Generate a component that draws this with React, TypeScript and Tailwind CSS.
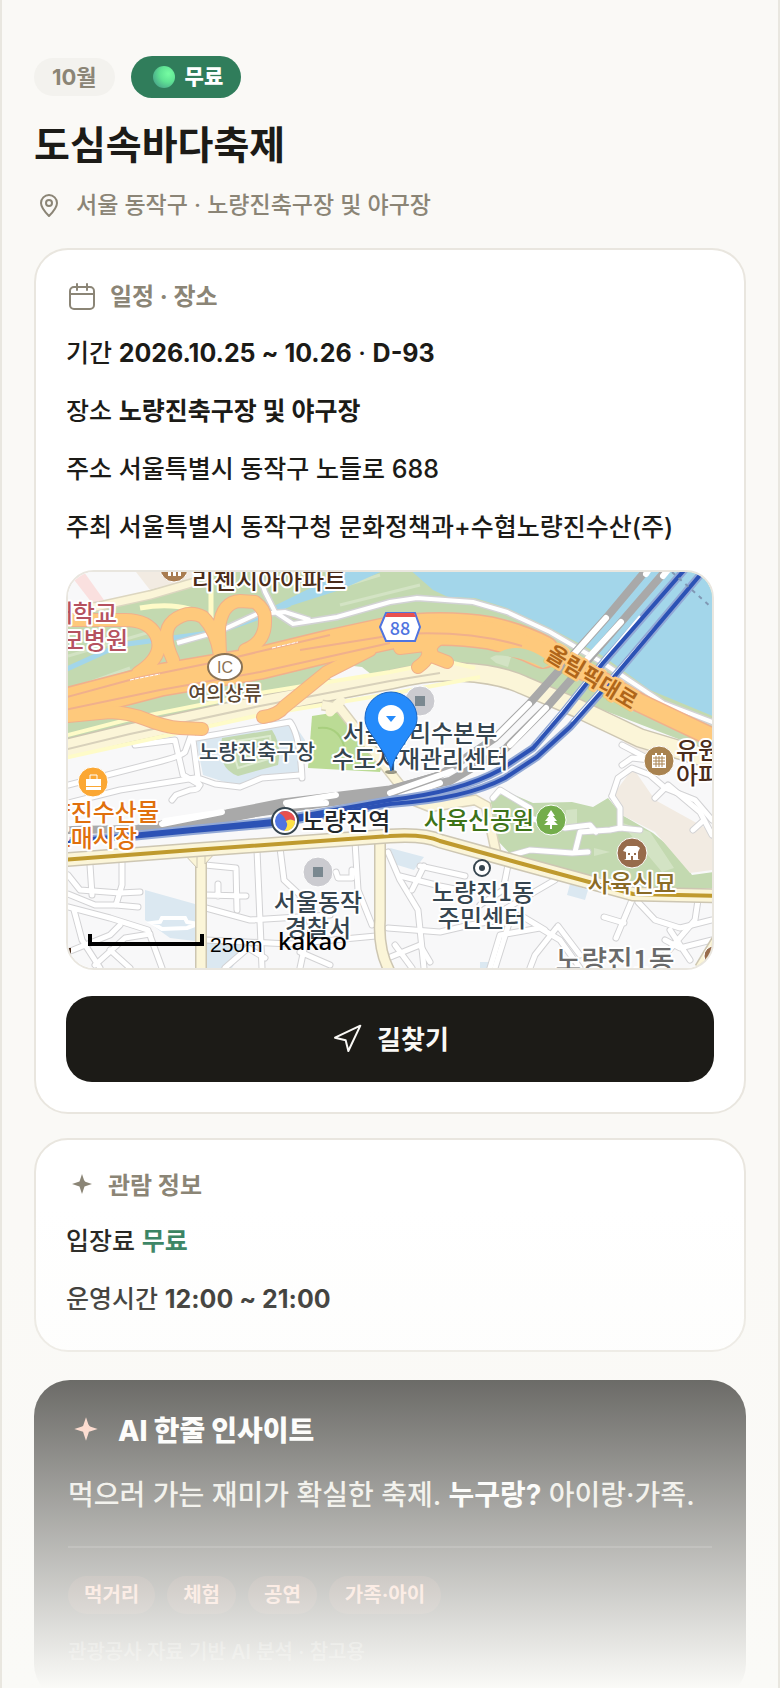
import React from 'react';
import { Navigation } from 'lucide-react';

const FONT = "font-['Inter','Noto_Sans_CJK_KR',sans-serif]";

const TAGS = ['먹거리', '체험', '공연', '가족·아이'];

const SCHEDULE = [
  { label: '기간', value: '2026.10.25 ~ 10.26', strong: true, extra: 'D-93' },
  { label: '장소', value: '노량진축구장 및 야구장', strong: true },
  { label: '주소', value: '서울특별시 동작구 노들로 688', strong: false },
  { label: '주최', value: '서울특별시 동작구청 문화정책과+수협노량진수산(주)', strong: false },
];

// Local streets on the map, drawn twice (casing + fill)
const STREETS = [
  'M68 785 L150 764 Q180 757 185 752 L193 730',
  'M68 803 L120 790 L195 778 Q205 790 190 790 L176 795 L172 800',
  'M192 732 L198 778 L215 784 L240 787 L262 778 L300 775',
  'M196 738 L290 722 Q300 735 302 778',
  'M135 745 L175 740 L183 775 L200 785',
  'M68 875 L80 890 L120 893 L140 892',
  'M90 865 L92 895 M122 862 L122 885 L116 905 L138 907',
  'M68 907 L110 918 L148 930 L162 968',
  'M74 910 L82 940 L100 968',
  'M68 894 L95 905 L115 905',
  'M68 952 L110 935 L120 925',
  'M95 965 L125 938 L150 934 M110 950 L130 968',
  'M205 865 L236 868 L237 910 M205 895 L246 896 M218 884 L218 896',
  'M206 908 L250 920 L330 915 M257 850 L262 968',
  'M280 848 L284 880 L300 895 L306 940 L300 968',
  'M355 842 L358 890 L372 925 M336 872 L338 878 L352 878 L352 870',
  'M206 940 L290 944 L376 936 M300 952 L330 965',
  'M225 968 L248 948 L265 958',
  'M388 852 L400 880 L418 910 L424 968',
  'M400 876 L440 886 L460 890 M420 866 L465 876 M424 866 L412 890',
  'M388 928 L440 932 L470 925 L500 920',
  'M388 958 L420 945 L430 962 M395 945 L412 968',
  'M490 968 L500 935 L540 928 L560 940 L580 968',
  'M558 926 L535 955 L530 968 M558 926 L580 955',
  'M500 912 L555 880 M508 865 L503 890 L480 905',
  'M510 920 L495 968 M545 930 L520 915 L500 925',
  'M632 900 L616 938 M604 917 L624 923',
  'M638 902 L655 920 L680 928 L712 920',
  'M698 900 L695 920 L665 955 M670 930 L690 960 M712 940 L680 948 L665 940',
  'M435 790 L410 800 M493 798 L500 790 L530 808 L530 815',
  'M512 855 L530 850 L572 853 L588 852 M575 852 L580 832 L610 830 L620 828 L640 830',
  'M530 818 L565 828 L590 825 L596 832',
  'M612 796 L618 778 L632 768 L650 775 L665 788 L695 800 L712 820',
  'M612 796 L620 808 L620 828',
  'M655 798 L668 785 L700 812 L712 835 M693 830 L704 820',
  'M622 745 L645 757 M622 765 L632 758 L650 760',
];

type LabelProps = {
  x: number;
  y: number;
  size?: number;
  color?: string;
  anchor?: 'start' | 'middle' | 'end';
  children: React.ReactNode;
};

const MapLabel: React.FC<LabelProps> = ({ x, y, size = 24, color = '#36454f', anchor = 'middle', children }) => (
  <text
    x={x}
    y={y}
    fontSize={size}
    fontWeight={500}
    fill={color}
    stroke="#ffffff"
    strokeWidth={4}
    strokeLinejoin="round"
    paintOrder="stroke"
    textAnchor={anchor}
  >
    {children}
  </text>
);

const Road: React.FC<{ d: string; width: number; fill: string; casing: string; edge?: number }> = ({
  d,
  width,
  fill,
  casing,
  edge = 3,
}) => (
  <>
    <path d={d} fill="none" stroke={casing} strokeWidth={width + edge} />
    <path d={d} fill="none" stroke={fill} strokeWidth={width} />
  </>
);

const RAMPS =
  'M68 620 L125 620 Q148 620 156 635 Q166 655 138 673 M173 660 Q160 632 173 621 Q188 609 203 617 Q216 630 220 655 M220 655 L219 628 Q222 602 240 601 L255 602 Q266 610 265 620 Q266 642 245 650 M68 716 L110 712 Q130 713 145 719 Q165 727 180 728 L202 729 M263 717 Q278 715 284 707 L327 672 L370 650 M400 648 L425 645 Q434 656 418 667 M445 636 Q424 645 434 657 L447 662';

const EXPRESSWAY =
  'M60 706 L160 680 L260 663 L330 646 L390 633 Q440 625 490 633 Q520 640 543 652';
const RIVERSIDE = 'M400 629 Q450 622 490 631 L543 651 L590 674 L640 703 L720 741';
const WALK =
  'M257 568 L265 592 L275 612 L293 624 L337 617 L390 602 L417 598 L473 602 L507 612 L550 632 L603 663 L663 703 L720 725 M177 643 L220 631 L257 614 L285 612 L310 620';
const SOUTH_ROAD =
  'M60 750 L130 733 L260 705 L390 680 Q430 670 460 672 Q500 674 523 685 L577 708 L640 738 L720 762';
const RAIL_A = 'M648 568 L607 617 L530 703 L495 738 L440 775 L390 790 L330 800 L227 814 L137 829 L60 830';
const RAIL_B = 'M668 568 L623 620 L547 707 L505 749 L450 781 L390 794 L283 809 L137 830';
const BLUE_A =
  'M686 568 L603 663 L563 713 L533 748 L500 770 Q460 792 390 800 L273 821 L193 829 L60 842';
const BLUE_B =
  'M706 568 L603 690 L570 727 L537 757 L505 778 Q465 799 390 804 L273 824 L193 831 L120 838';
const GOLD = 'M60 860 L193 850 L390 836 Q425 834 440 841 L523 864 L633 894 L720 896';

const FestivalMap: React.FC = () => (
  <svg
    viewBox="68 572 644 396"
    preserveAspectRatio="xMidYMid slice"
    className="block h-full w-full font-['Noto_Sans_CJK_KR',sans-serif]"
    role="img"
    aria-label="노량진축구장 주변 지도"
  >
    <rect x="60" y="560" width="660" height="420" fill="#f8f8f9" />

    {/* Land cover */}
    <path d="M60 640 L68 606 L130 598 L195 572 L720 572 L720 755 L577 700 L480 672 L390 685 L60 752 Z" fill="#c3d9b0" />
    <path d="M68 606 L60 572 L195 572 L190 580 L100 600 Z" fill="#f8f8f9" />
    <path d="M68 572 L84 572 L104 600 L92 603 Z" fill="#fae0df" />
    <path d="M136 572 L195 572 L190 580 L150 590 Z" fill="#f2ebe2" />
    <path d="M68 656 L150 632 M68 690 L130 668 M330 590 L380 575 M340 605 L420 585" stroke="#d3e3c4" strokeWidth="3" fill="none" />
    <path d="M60 672 L120 645 L217 632 L257 618 L290 604" fill="none" stroke="#a3d6ea" strokeWidth="5" />
    <path d="M272 607 L347 570 L385 570 L340 590 L290 606 Z" fill="#a3d6ea" />
    <path
      d="M408 568 L433 590 L448 597 L475 598 L507 608 L550 628 L603 656 L650 690 L720 719 L720 568 Z"
      fill="#a3d6ea"
    />
    <path d="M320 676 L345 665 L362 667 L372 675 L340 682 Z" fill="#f8f8f9" />
    <path d="M490 658 L500 653 L511 657 L508 667 L496 663 Z" fill="#d3e3c4" />
    <path d="M196 740 L290 718 L305 740 L302 778 L262 780 L240 787 L203 775 Z" fill="#dbe8f1" />
    <path d="M222 738 L272 730 Q282 745 278 765 L238 776 Q216 768 222 738 Z" fill="#c3d9b0" />
    <path d="M230 742 L270 736 L272 758 L238 768 Z" fill="none" stroke="#dcebcf" strokeWidth="2" />
    <path d="M312 716 L338 712 L384 760 L380 772 L308 768 Z" fill="#bbdb95" />
    <path d="M318 728 Q340 725 345 750 L345 768" fill="none" stroke="#a8cf7e" strokeWidth="2" />
    <path
      d="M490 797 L510 793 L533 803 L572 802 L593 807 L608 798 L622 815 L653 833 L677 853 L692 875 L720 871 L720 888 L650 890 L617 880 L577 874 L513 857 L497 840 Z"
      fill="#c3d9b0"
    />
    <path d="M566 810 L577 809 L577 828 L566 828 Z M594 848 L610 852 L594 856 Z M620 822 L650 832 L674 868 L662 872 Z" fill="#d3e3c4" />
    <path d="M633 768 L655 800 L720 836 L720 869 L690 873 L655 832 L622 815 L613 795 Z" fill="#f2ebe2" />
    <path d="M628 733 L662 748 L662 772 L622 748 Z" fill="#f2ebe2" />
    <path d="M145 890 L195 904 L195 941 L170 938 L145 920 Z" fill="#dbe8f1" />
    <path d="M206 940 L245 946 L232 968 L206 968 Z M390 848 L424 857 L414 870 L394 864 Z M570 884 L588 890 L585 900 L567 895 Z M480 962 L500 962 L498 970 L480 970 Z M263 918 L276 916 L274 922 Z" fill="#dbe8f1" />

    {/* Streets */}
    {STREETS.map((d) => (
      <path key={d} d={d} fill="none" stroke="#d2d2d4" strokeWidth="7" strokeLinecap="round" strokeLinejoin="round" />
    ))}
    {STREETS.map((d) => (
      <path key={d} d={d} fill="none" stroke="#ffffff" strokeWidth="5" strokeLinecap="round" strokeLinejoin="round" />
    ))}
    <path d="M152 923 L160 922 L162 918 L185 918 L187 922 L198 924 L187 928 L162 929 Z" fill="none" stroke="#ffffff" strokeWidth="4" />

    {/* Yellow roads */}
    <Road d="M60 612 L100 606 L150 595 L195 582" width={7} fill="#fbf5d8" casing="#dcd6c0" />
    <path d="M140 608 Q185 600 212 620 M211 568 L211 618" stroke="#fefbc8" strokeWidth="5" fill="none" />
    <Road d={SOUTH_ROAD} width={17} fill="#fbf5d8" casing="#cdc6b2" />
    <path d="M60 737 L130 719 L260 693 L390 672 L445 661 L475 668" fill="none" stroke="#fefbc8" strokeWidth="4" />
    <path d="M60 759 L260 715 L390 694 L480 677" fill="none" stroke="#fefbc8" strokeWidth="4" />
    <path d="M60 751 L130 734 L260 706 L390 681 L440 673" fill="none" stroke="#d8d1bb" strokeWidth="2" />
    <Road d="M322 705 L340 708 L392 775 L412 800 L430 807 L475 800 L486 806 L496 852" width={8} fill="#fbf5d8" casing="#d8d1bb" />
    <path d="M330 712 L341 701" stroke="#fbf5d8" strokeWidth="9" strokeLinecap="round" />
    <Road d="M201 850 L201 972" width={9} fill="#fbf5d8" casing="#cdc6b2" />
    <Road d="M380 838 L380 920 Q378 950 390 972" width={9} fill="#fbf5d8" casing="#cdc6b2" />
    <Road d="M720 935 L700 968" width={9} fill="#fbf5d8" casing="#cdc6b2" />
    <path d="M184 854 L197 868 L197 854 Z M205 853 L216 852 L205 864 Z" fill="#fbf5d8" stroke="#cdc6b2" />
    <Road d={GOLD} width={12} fill="#fbf5d8" casing="#cdc6b2" />
    <path d={GOLD} fill="none" stroke="#bf9a2e" strokeWidth="4" />

    {/* Expressway and ramps */}
    <Road d={WALK} width={4} fill="#ffffff" casing="#d2d2d4" />
    <g strokeLinecap="round" strokeLinejoin="round">
      <path d={RAMPS} fill="none" stroke="#f0b08c" strokeWidth="14" />
      <path d={EXPRESSWAY} fill="none" stroke="#f0b08c" strokeWidth="34" />
      <path d={RIVERSIDE} fill="none" stroke="#f0b08c" strokeWidth="20" />
      <path d={EXPRESSWAY} fill="none" stroke="#fec97c" strokeWidth="31" />
      <path d={RIVERSIDE} fill="none" stroke="#fec97c" strokeWidth="17" />
      <path d={RAMPS} fill="none" stroke="#fec97c" strokeWidth="12" />
    </g>
    <path
      d="M60 699 L137 678 L220 661 L270 649 L330 635 M60 711 L160 690 L260 672 L390 643 M300 650 L400 634 Q470 630 522 646"
      fill="none"
      stroke="#f0b08c"
      strokeWidth="2"
    />
    <path d="M130 680 L160 674 M272 648 L298 642" stroke="#ffffff" strokeWidth="1" strokeDasharray="4 1" />
    <path d="M500 652 Q523 640 552 664 L543 668 Q515 652 480 656 Z" fill="#c3d9b0" />

    {/* Railway */}
    <g fill="none" strokeLinejoin="round">
      <path d={RAIL_A} stroke="#a9a9a9" strokeWidth="8" />
      <path d={RAIL_B} stroke="#a9a9a9" strokeWidth="8" />
      <path d="M140 831 L227 816 L283 805 L390 792 L440 778" stroke="#a9a9a9" strokeWidth="13" />
      <g stroke="#ffffff" strokeWidth="6" strokeLinecap="round">
        <path d="M650 568 L646 574 M606 618 L575 653 M529 704 L495 738 M668 570 L663 576 M621 622 L588 658 M546 708 L510 745 M390 793 L452 771 M400 797 L440 783" />
        <path d="M162 824 L222 812 M165 821 L210 814 M286 803 L336 795 M288 806 L326 803 M64 824 L80 822" />
      </g>
      <path d={BLUE_A} stroke="#93a9d6" strokeWidth="8" />
      <path d={BLUE_B} stroke="#93a9d6" strokeWidth="8" />
      <path d="M640 616 L603 660 L563 710 L535 744 M655 627 L603 687 L572 722" stroke="#ffffff" strokeWidth="2" />
      <path d={BLUE_A} stroke="#2c52b5" strokeWidth="4" />
      <path d={BLUE_B} stroke="#2c52b5" strokeWidth="4" />
    </g>
    <path d="M672 572 L712 608" stroke="#8098b4" strokeWidth="2" strokeDasharray="4 5" />

    {/* Place markers */}
    <g stroke="#ffffff" strokeWidth="1">
      <circle cx="174" cy="568" r="14" fill="#a97c50" />
      <circle cx="93" cy="782" r="15" fill="#fba733" />
      <circle cx="420" cy="701" r="15" fill="#cbcbd0" />
      <circle cx="318" cy="872" r="15" fill="#cbcbd0" />
      <circle cx="659" cy="761" r="15" fill="#a98350" />
      <circle cx="551" cy="820" r="15" fill="#74ad4c" />
      <circle cx="632" cy="853" r="15" fill="#976b4b" />
      <circle cx="714" cy="956" r="10" fill="#976b4b" />
    </g>
    <path d="M168 572 h3 v4 h-3 z M173 572 h3 v4 h-3 z M178 572 h3 v4 h-3 z" fill="#ffffff" />
    <rect x="415" y="696" width="10" height="10" fill="#7a8890" />
    <rect x="313" y="867" width="10" height="10" fill="#7a8890" />
    <path d="M86 779 h15 v7 h-15 z M86 787 h15 v3 h-15 z" fill="#ffffff" />
    <path d="M90 779 V775 H97 V779" fill="none" stroke="#ffffff" strokeWidth="1" />
    <path d="M652 755 h3 v-2 h2 v2 h4 v-2 h2 v2 h3 v13 h-14 z" fill="#ffffff" />
    <path d="M653 758 H665 M653 761 H665 M653 764 H665 M656 756 V767 M659 756 V767 M662 756 V767" stroke="#a98350" strokeWidth="1" />
    <path d="M551 810 L555 816 L553 816 L557 821 L554 821 L558 825 L552 825 L552 829 L550 829 L550 825 L544 825 L548 821 L545 821 L549 816 L547 816 Z" fill="#ffffff" />
    <path d="M625 848 L627 846 L637 846 L640 848 L638 852 L638 859 L640 860 L624 860 L626 859 L626 852 L623 851 Z" fill="#ffffff" />
    <path d="M631 860 V856 H633 V860 Z M628 853 h2 v2 h-2 z M634 853 h2 v2 h-2 z" fill="#976b4b" />
    <rect x="68" y="948" width="3" height="6" fill="#4a2c1a" />

    {/* Interchange, route shield, station */}
    <ellipse cx="225" cy="667" rx="17" ry="13" fill="#ffffff" stroke="#8b7355" strokeWidth="2" />
    <text x="225" y="673" fontSize="16" textAnchor="middle" fill="#8b7355" className="font-['Liberation_Sans',sans-serif]">
      IC
    </text>
    <path d="M386 613 L415 613 L420 627 L415 641 L386 641 L380 627 Z" fill="#ffffff" stroke="#4f74e0" strokeWidth="2" />
    <path d="M387 613 H414 L416 617 H385 Z" fill="#e8504f" />
    <text x="400" y="635" fontSize="18" fontWeight="500" textAnchor="middle" fill="#4f74e0">
      88
    </text>
    {/* three-lobed swirl: red top, yellow right, blue left */}
    <circle cx="285" cy="821" r="13" fill="#ffffff" stroke="#36454f" strokeWidth="2" />
    <circle cx="285" cy="821" r="10" fill="#4f74e0" />
    <path d="M279 813 A10 10 0 0 1 295 821 Q290 818 286 821 Q284 815 279 813 Z" fill="#e8504f" />
    <path d="M286 821 Q290 818 295 821 A10 10 0 0 1 284 831 Q289 826 286 821 Z" fill="#fde045" />
    <circle cx="482" cy="868" r="8" fill="#ffffff" stroke="#36454f" strokeWidth="2" />
    <circle cx="482" cy="868" r="3" fill="#36454f" />

    {/* Labels */}
    <MapLabel x={269} y={589} color="#4a2c1a">리첸시아아파트</MapLabel>
    <MapLabel x={117} y={622} color="#b5525f" anchor="end">대학교</MapLabel>
    <MapLabel x={128} y={649} color="#b5525f" anchor="end">성모병원</MapLabel>
    <MapLabel x={225} y={701} size={20} color="#5b4632">여의상류</MapLabel>
    <MapLabel x={257} y={759} size={21}>노량진축구장</MapLabel>
    <MapLabel x={420} y={742}>서울아리수본부</MapLabel>
    <MapLabel x={420} y={768}>수도자재관리센터</MapLabel>
    <MapLabel x={676} y={759} color="#4a2c1a" anchor="start">유원</MapLabel>
    <MapLabel x={676} y={784} color="#4a2c1a" anchor="start">아파트</MapLabel>
    <MapLabel x={159} y={821} color="#e0700d" anchor="end">노량진수산물</MapLabel>
    <MapLabel x={137} y={847} color="#e0700d" anchor="end">도매시장</MapLabel>
    <MapLabel x={302} y={830} color="#22262a" anchor="start">노량진역</MapLabel>
    <MapLabel x={479} y={829} color="#3d7318">사육신공원</MapLabel>
    <MapLabel x={632} y={892} color="#8a6b26">사육신묘</MapLabel>
    <MapLabel x={483} y={901}>노량진1동</MapLabel>
    <MapLabel x={482} y={927}>주민센터</MapLabel>
    <MapLabel x={318} y={911}>서울동작</MapLabel>
    <MapLabel x={318} y={937}>경찰서</MapLabel>
    <MapLabel x={615} y={971} size={28} color="#6a6a6a">노량진1동</MapLabel>
    <text
      x="592"
      y="685"
      fontSize="22"
      fontWeight="700"
      textAnchor="middle"
      fill="#b0661a"
      stroke="#fec97c"
      strokeWidth="5"
      strokeLinejoin="round"
      paintOrder="stroke"
      transform="rotate(31 592 677)"
    >
      올림픽대로
    </text>

    {/* Selected place */}
    <ellipse cx="391" cy="772" rx="6" ry="2" fill="#6f6f5e" opacity="0.7" />
    <path
      d="M391 771 C388 757 382 751 374 738 C368 730 365 725 365 718 A26 26 0 0 1 417 718 C417 725 414 730 408 738 C400 751 394 757 391 771 Z"
      fill="#258bfb"
      stroke="#1a66c4"
      strokeWidth="1"
    />
    <circle cx="391" cy="718" r="13" fill="#ffffff" />
    <path d="M386 716 L396 716 L391 722 Z" fill="#258bfb" />

    {/* Scale and attribution */}
    <path d="M90 934 V944 H202 V934" fill="none" stroke="#000000" strokeWidth="4" />
    <text x="210" y="952" fontSize="21" fill="#000000" className="font-['Liberation_Sans',sans-serif]">
      250m
    </text>
    <text x="278" y="950" fontSize="24" fontWeight="500" fill="#000000" className="font-['Noto_Sans',sans-serif]">
      kakao
    </text>
  </svg>
);

const Sparkle: React.FC<{ className?: string }> = ({ className }) => (
  <svg viewBox="0 0 24 24" className={className} fill="currentColor" aria-hidden="true">
    <path d="M12 2 L14 8 Q15 10 16 10 L22 12 L16 14 Q14 14 14 16 L12 22 L10 16 Q10 14 8 14 L2 12 L8 10 Q10 10 10 8 Z" />
  </svg>
);

const App: React.FC = () => {
  return (
    <div className={`relative h-screen overflow-hidden border-x-2 border-[#e9e7e0] bg-[#faf9f6] px-8 pt-14 text-[#1c1b17] ${FONT}`}>
      {/* Header */}
      <header>
        <div className="flex items-center gap-4">
          <span className="flex h-[38px] items-center rounded-full bg-[#f3f2ee] px-[18px] text-[22px] font-bold text-[#8b8576]">
            10월
          </span>
          <span className="flex h-[42px] items-center gap-[10px] rounded-full bg-[#307d5b] pr-[18px] pl-[22px] text-[21px] font-extrabold text-white">
            <span className="size-[22px] rounded-full bg-[radial-gradient(circle_at_70%_35%,#76fca2_0%,#5fe394_40%,#4aa88a_80%,#6a9aa8_100%)]" />
            무료
          </span>
        </div>
        <h1 className="mt-[22px] text-[39px] leading-[50px] font-bold">도심속바다축제</h1>
        <p className="mt-[18px] flex h-[34px] items-center gap-3 text-[23px] font-medium text-[#8b8576]">
          <svg viewBox="0 0 30 30" className="size-[30px]" fill="none" stroke="currentColor" strokeWidth="2" aria-hidden="true">
            <path d="M15 26 C11 22 7 18 7 13 A8 8 0 0 1 23 13 C23 18 19 22 15 26 Z" strokeLinejoin="round" />
            <circle cx="15" cy="13" r="3" />
          </svg>
          서울 동작구 · 노량진축구장 및 야구장
        </p>
      </header>

      {/* Schedule & place */}
      <section className="mt-[26px] rounded-[34px] border-2 border-[#e9e6df] bg-white p-[30px]">
        <h2 className="flex h-[34px] items-center gap-[14px] text-2xl font-bold text-[#8b8576]">
          <svg viewBox="0 0 30 30" className="size-[30px]" fill="none" stroke="currentColor" strokeWidth="2" strokeLinecap="round" aria-hidden="true">
            <rect x="4" y="5" width="24" height="22" rx="4" />
            <path d="M4 12 H28 M11 2 V8 M21 2 V8" />
          </svg>
          일정 · 장소
        </h2>
        <div className="mt-[18px] flex flex-col gap-4 text-[25px] leading-[42px] font-medium">
          {SCHEDULE.map((row) => (
            <p key={row.label}>
              {row.label} {row.strong ? <b className="font-bold">{row.value}</b> : row.value}
              {row.extra && (
                <>
                  {' · '}
                  <b className="font-bold">{row.extra}</b>
                </>
              )}
            </p>
          ))}
        </div>
        <div className="mt-[22px] h-[400px] overflow-hidden rounded-[28px] border-2 border-[#e9e6df]">
          <FestivalMap />
        </div>
        <button
          type="button"
          className="mt-[26px] flex h-[86px] w-full items-center justify-center gap-[14px] rounded-[26px] bg-[#1c1b17] text-[26px] font-bold text-[#faf9f6]"
        >
          <Navigation className="size-8" strokeWidth={1.5} />
          길찾기
        </button>
      </section>

      {/* Visit info */}
      <section className="mt-6 rounded-[34px] border-2 border-[#e9e6df] bg-white p-[30px]">
        <h2 className="flex h-8 items-center gap-[14px] text-2xl font-bold text-[#8b8576]">
          <Sparkle className="mb-1 ml-1 size-6" />
          관람 정보
        </h2>
        <div className="mt-[18px] flex flex-col gap-4 text-[25px] leading-[42px] font-medium">
          <p>
            입장료 <b className="font-bold text-[#307d5b]">무료</b>
          </p>
          <p>
            운영시간 <b className="font-bold">12:00 ~ 21:00</b>
          </p>
        </div>
      </section>

      {/* AI insight */}
      <section className="mt-7 rounded-[36px] bg-[#1c1b17] px-[34px] py-8 text-white">
        <h2 className="flex h-[38px] items-center gap-[18px] text-[28px] font-extrabold">
          <Sparkle className="mb-1 ml-1 size-7 text-[#ffc4b0]" />
          AI 한줄 인사이트
        </h2>
        <p className="mt-[22px] text-[28px] leading-[46px] font-medium text-[#e8e6df]">
          먹으러 가는 재미가 확실한 축제. <b className="font-bold text-white">누구랑?</b> 아이랑·가족.
        </p>
        <div className="mt-7 flex gap-3 border-t-2 border-white/15 pt-7">
          {TAGS.map((tag) => (
            <span key={tag} className="flex h-[38px] items-center rounded-full bg-[#ff8c6e]/15 px-4 text-[20px] font-bold text-[#ffb8a0]">
              {tag}
            </span>
          ))}
        </div>
        <p className="mt-[22px] text-[20px] leading-8 font-medium text-white/40">관광공사 자료 기반 AI 분석 · 참고용</p>
      </section>

      <div className="pointer-events-none absolute inset-x-0 bottom-0 h-[480px] bg-linear-to-b from-[#fafaf7]/0 to-[#fafaf7]" />
    </div>
  );
};

export default App;
